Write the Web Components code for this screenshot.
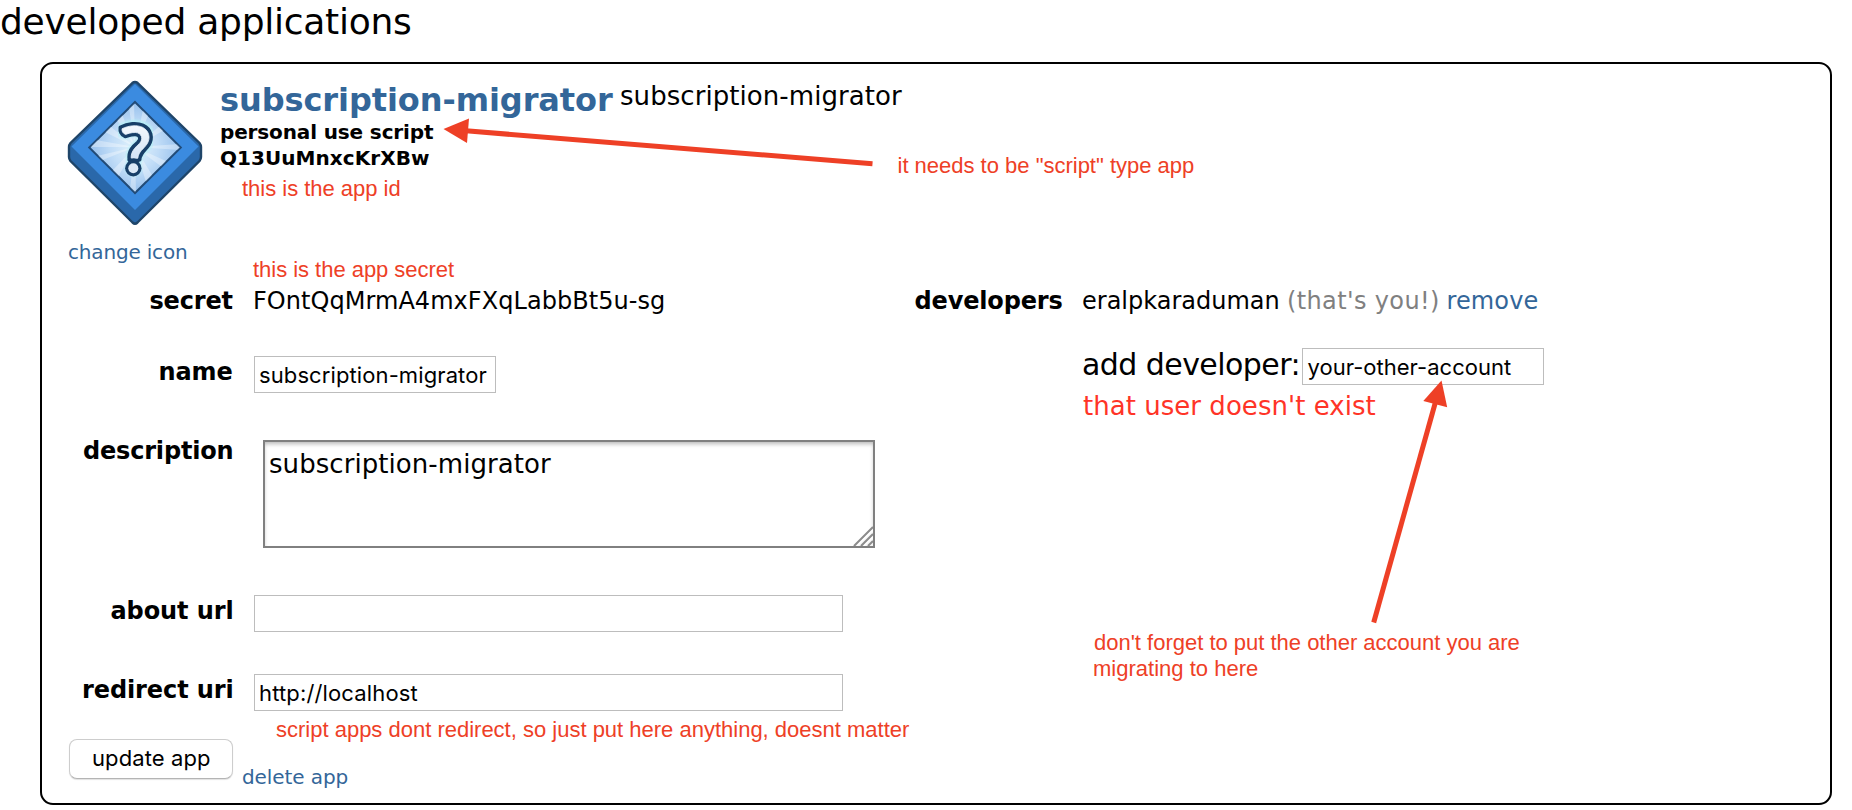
<!DOCTYPE html>
<html lang="en">
<head>
<meta charset="utf-8">
<title>developed applications</title>
<style>
html,body{margin:0;background:#fff}
body{width:1852px;height:810px;overflow:hidden;font-family:"DejaVu Sans",Verdana,sans-serif;color:#000}
</style>
</head>
<body>
<apps-page></apps-page>
<script>
const define = (name, html, base = HTMLElement) => {
  const tpl = document.createElement('template');
  tpl.innerHTML = html;
  customElements.define(name, class extends base {
    constructor() {
      super();
      this.attachShadow({ mode: 'open' }).append(tpl.content.cloneNode(true));
    }
  });
};

/* Text whose visible ink fills exactly the width given in "w". */
class FitText extends HTMLElement {
  connectedCallback() {
    if (this.shadowRoot) return;
    const root = this.attachShadow({ mode: 'open' });
    const a = n => this.getAttribute(n);
    const size = +a('size'), w = +a('w'), lh = +a('lh'), mt = +(a('mt') || 0);
    const weight = this.hasAttribute('bold') ? 700 : 400;
    const family = { sans: '"Liberation Sans",Arial,sans-serif', ui: 'Inter,sans-serif' }[a('face')] || '"DejaVu Sans",Verdana,sans-serif';
    const ctx = (FitText.ctx ||= document.createElement('canvas').getContext('2d'));
    ctx.font = `${weight} ${size}px ${family}`;
    const text = this.textContent;
    const m = ctx.measureText(text);
    const ink = m.actualBoundingBoxLeft + m.actualBoundingBoxRight;
    const ls = (w - ink) / (text.length - 1);
    root.innerHTML = `<style>
      :host{display:block;flex:none;width:${w}px;height:${lh}px;margin-top:${mt}px;white-space:nowrap}
      span{display:block;margin-left:${m.actualBoundingBoxLeft}px;font:${weight} ${size}px/${lh}px ${family};letter-spacing:${ls.toFixed(3)}px;font-kerning:auto;font-variant-ligatures:none}
    </style><span><slot></slot></span>`;
  }
}
customElements.define('fit-text', FitText);

define('app-icon', `<style>:host{display:block;width:134px;height:145px}svg{display:block;overflow:visible;filter:blur(.45px)}</style>
<svg width="134" height="145" viewBox="0 0 134 145">
  <defs>
    <radialGradient id="g" cx="50%" cy="50%" r="52%"><stop offset="0" stop-color="#e4f4fc"/><stop offset=".5" stop-color="#c0dcf7"/><stop offset="1" stop-color="#93bdeb"/></radialGradient>
    <linearGradient id="q" x1="0" y1="0" x2="0" y2="1"><stop offset="0" stop-color="#f4f8fd"/><stop offset="1" stop-color="#d3e3f5"/></linearGradient>
    <clipPath id="c"><path d="M67 22 112 66.500 67 111 22 66.500Z"/></clipPath>
    <filter id="b" x="-30%" y="-30%" width="160%" height="160%"><feGaussianBlur stdDeviation="1.300"/></filter>
  </defs>
  <path d="M64.500 1.800Q67 0 69.500 1.800L131.500 62Q133 64 133 66V76Q133 78 131.500 80L69.500 141.500Q67 143.800 64.500 141.500L2.500 80Q1 78 1 76V66Q1 64 2.500 62Z" fill="#2a68aa" stroke="#1f4569" stroke-width="2.400"/>
  <path d="M67 3 130.500 65.500 67 129 3.500 65.500Z" fill="#3b8be0"/>
  <path d="M67 21 112.800 66.500 67 112 21.200 66.500Z" fill="url(#g)" stroke="#214b78" stroke-width="2"/>
  <g clip-path="url(#c)" fill="#fff" opacity=".34">
    <path d="M67 66 60 20H66ZM67 66 76 24 82 30ZM67 66 94 43 98 48ZM67 66 112 63V69ZM67 66 98 80 94 86ZM67 66 84 94 78 101ZM67 66 68 112 62 108ZM67 66 50 96 44 90ZM67 66 32 80 29 75ZM67 66 23 66 28 59ZM67 66 37 51 42 45ZM67 66 49 39 54 33Z"/>
  </g>
  <g fill="none" stroke-linecap="butt" stroke-linejoin="round">
    <g stroke="#b5eef6" stroke-width="17" filter="url(#b)" opacity=".9" stroke-linecap="round"><path d="M57 49.500C64 46.500 78 45 78.500 56.500 78.500 65 66.500 66.500 66.300 77"/><path d="M65.500 87h.1"/></g>
    <path stroke="#183f68" fill="#183f68" stroke-width="4" d="M52.500 46.500C60 42.500 69 42 75 44.500 83 48 85 57.500 80.500 64 77 69.500 72 71.500 71.500 78.500Q66 80.500 61.500 78.500C60.500 70 65 65.500 70 61.500 74 57.500 72 53.500 67.500 53.200 63 53 60 54.500 57 55.200 53.500 54 52 50 52.500 46.500Z"/>
    <circle cx="65.300" cy="87.200" r="8.200" fill="#183f68"/>
    <path fill="url(#q)" stroke="#eaf2fb" stroke-width=".8" d="M54 47.800C61 44.300 69 43.800 74.500 46.300 81 49.500 83 57 79 63 75.500 68.300 70.500 70.500 69.800 77.200Q66 78.500 63.200 77.200C62.800 71 66.500 67 71.300 62.700 76 58 73.500 51.800 67.500 51.500 63 51.300 60 52.800 57.500 53.400 55 52.500 53.800 50.500 54 47.800Z"/>
    <path d="M60 80.200Q65.500 77.500 71 80.200" stroke="#183f68" stroke-width="3"/>
    <circle cx="65.300" cy="87.200" r="5" fill="#dce9f7"/>
  </g>
</svg>`);

define('text-box', `<style>
:host{display:block;box-sizing:border-box;width:242px;height:37px;border:1px solid #bdbdbd;background:#fff;padding:1px 0 0 5px}
:host([wide]){width:589px}
</style><slot></slot>`);

define('text-area', `<style>
:host{display:block;position:relative;box-sizing:border-box;width:612px;height:108px;margin-left:9px;border:2px solid #808080;padding:6px 5px 0;box-shadow:inset 0 3px 4px -1px rgba(0,0,0,.28)}
svg{position:absolute;right:0;bottom:0}
</style><slot></slot>
<svg width="20" height="20" viewBox="0 0 20 20" fill="none"><path d="M0 20 20 0V20Z" fill="#f4f4f4"/><path d="M1 20 20 1M8 20 20 8M15 20 20 15" stroke="#8c8c8c" stroke-width="2"/><path d="M4 20 20 4M11 20 20 11" stroke="#fff" stroke-width="1.500"/></svg>`);

define('push-button', `<style>
:host{display:block;box-sizing:border-box;width:164px;height:40px;border:1px solid #cdcdcd;border-bottom-color:#b4b4b4;border-radius:8px;background:#fff;padding:0 23px;box-shadow:0 1px 1px rgba(0,0,0,.12)}
</style><slot></slot>`);

/* One line of the form: right-aligned label, then the field. */
define('form-row', `<style>
:host{display:grid;grid-template-columns:var(--label,190.500px) 1fr;column-gap:var(--gap,21.500px)}
.l{display:flex;justify-content:flex-end}
</style><div class="l"><slot name="label"></slot></div><div><slot></slot></div>`);

/* Red remark laid over the form. */
customElements.define('red-note', class extends HTMLElement {
  connectedCallback() {
    if (this.shadowRoot) return;
    this.attachShadow({ mode: 'open' }).innerHTML = `<style>:host{position:absolute;left:${this.getAttribute('x')}px;top:${this.getAttribute('y')}px;color:#ee4026}</style><slot></slot>`;
  }
});

define('red-arrows', `<style>:host{position:absolute;left:0;top:0;pointer-events:none}svg{display:block}</style>
<svg width="1852" height="810" fill="#ee4026" stroke="none">
  <path d="M443.500 129 469 118.500 467 143Z"/><path d="M466 130.800 872.500 163.800" stroke="#ee4026" stroke-width="5"/>
  <path d="M1441.500 380.500 1423.300 401 1447.200 407.200Z"/><path d="M1435.500 402 1373.700 622.500" stroke="#ee4026" stroke-width="5"/>
</svg>`);

define('app-card', `<style>
:host{display:block;box-sizing:border-box;width:1792px;height:743px;margin:19px 0 0 40px;border:2px solid #000;border-radius:13px;--link:#336699}
.link{color:var(--link)}
.head{display:grid;grid-template-columns:134px 1fr;column-gap:19px;height:220px;padding-left:26px}
.icon{padding-top:17px}
.icon .link{margin-left:1px}
.info{padding-top:12px}
.title{display:flex;column-gap:8px;height:42px}
.body{display:grid;grid-template-columns:835px 1fr;height:455px}
.left{display:grid;grid-template-rows:72px 84px 155px 79px 65px}
.right{display:grid;grid-template-rows:64px 1fr;--label:185.500px;--gap:20.500px}
.people,.add{display:flex}
.people{column-gap:10.500px}
.add{column-gap:4px;height:43px}
.foot{display:flex;column-gap:10px;padding-left:27px}
</style>
<div class="head">
  <div class="icon"><app-icon></app-icon><fit-text class="link" size="20" w="117" lh="24" mt="14">change icon</fit-text></div>
  <div class="info">
    <div class="title"><fit-text class="link" bold size="32" w="392" lh="40" mt="4">subscription-migrator</fit-text><fit-text size="26" w="281" lh="40">subscription-migrator</fit-text></div>
    <fit-text bold size="20" w="213" lh="27" mt="1">personal use script</fit-text>
    <fit-text bold size="20" w="208" lh="27" mt="-1">Q13UuMnxcKrXBw</fit-text>
  </div>
</div>
<div class="body">
  <div class="left">
    <form-row><fit-text slot="label" bold size="24" w="82" lh="30" mt="2">secret</fit-text><fit-text style="margin-left:1px" size="24" w="409" lh="30" mt="2">FOntQqMrmA4mxFXqLabbBt5u-sg</fit-text></form-row>
    <form-row><fit-text slot="label" bold size="24" w="72" lh="30" mt="1">name</fit-text><text-box><fit-text face="ui" size="22" w="226.500" lh="35">subscription-migrator</fit-text></text-box></form-row>
    <form-row><fit-text slot="label" bold size="24" w="148.500" lh="30" mt="-4">description</fit-text><text-area><fit-text size="26" w="281" lh="32">subscription-migrator</fit-text></text-area></form-row>
    <form-row><fit-text slot="label" bold size="24" w="121" lh="30" mt="1">about url</fit-text><text-box wide></text-box></form-row>
    <form-row><fit-text slot="label" bold size="24" w="148.500" lh="30" mt="1">redirect uri</fit-text><text-box wide><fit-text face="ui" size="22" w="157.500" lh="35">http://localhost</fit-text></text-box></form-row>
  </div>
  <div class="right">
    <form-row><fit-text slot="label" bold size="24" w="147" lh="30" mt="2">developers</fit-text>
      <div class="people"><fit-text size="24" w="195.500" lh="30" mt="2">eralpkaraduman</fit-text><fit-text style="color:#808080" size="24" w="149" lh="30" mt="2">(that's you!)</fit-text><fit-text class="link" size="24" w="89" lh="30" mt="2">remove</fit-text></div></form-row>
    <form-row><div>
      <div class="add"><fit-text size="30" w="214.500" lh="37" mt="-2">add developer:</fit-text><text-box><fit-text face="ui" size="22" w="203.500" lh="35">your-other-account</fit-text></text-box></div>
      <fit-text style="color:#ff3427" size="26" w="292.500" lh="30">that user doesn't exist</fit-text></div></form-row>
  </div>
</div>
<div class="foot"><push-button><fit-text face="ui" size="22" w="117" lh="36">update app</fit-text></push-button><fit-text class="link" size="20" w="104.500" lh="24" mt="26">delete app</fit-text></div>`);

define('apps-page', `<style>
:host{display:block;position:relative;width:1852px;height:810px}
h1{margin:0;padding-left:1px;font:inherit}
</style>
<h1><fit-text size="36" w="409" lh="43">developed applications</fit-text></h1>
<app-card></app-card>
<red-note x="242" y="176"><fit-text face="sans" size="22" w="157.500" lh="26">this is the app id</fit-text></red-note>
<red-note x="253" y="257"><fit-text face="sans" size="22" w="201" lh="26">this is the app secret</fit-text></red-note>
<red-note x="898.500" y="153"><fit-text face="sans" size="22" w="295.500" lh="26">it needs to be "script" type app</fit-text></red-note>
<red-note x="276" y="717"><fit-text face="sans" size="22" w="633" lh="26">script apps dont redirect, so just put here anything, doesnt matter</fit-text></red-note>
<red-note x="1094" y="630"><fit-text face="sans" size="22" w="425.500" lh="26">don't forget to put the other account you are</fit-text><fit-text face="sans" size="22" w="164" lh="26">migrating to here</fit-text></red-note>
<red-arrows></red-arrows>`);
</script>
</body>
</html>
